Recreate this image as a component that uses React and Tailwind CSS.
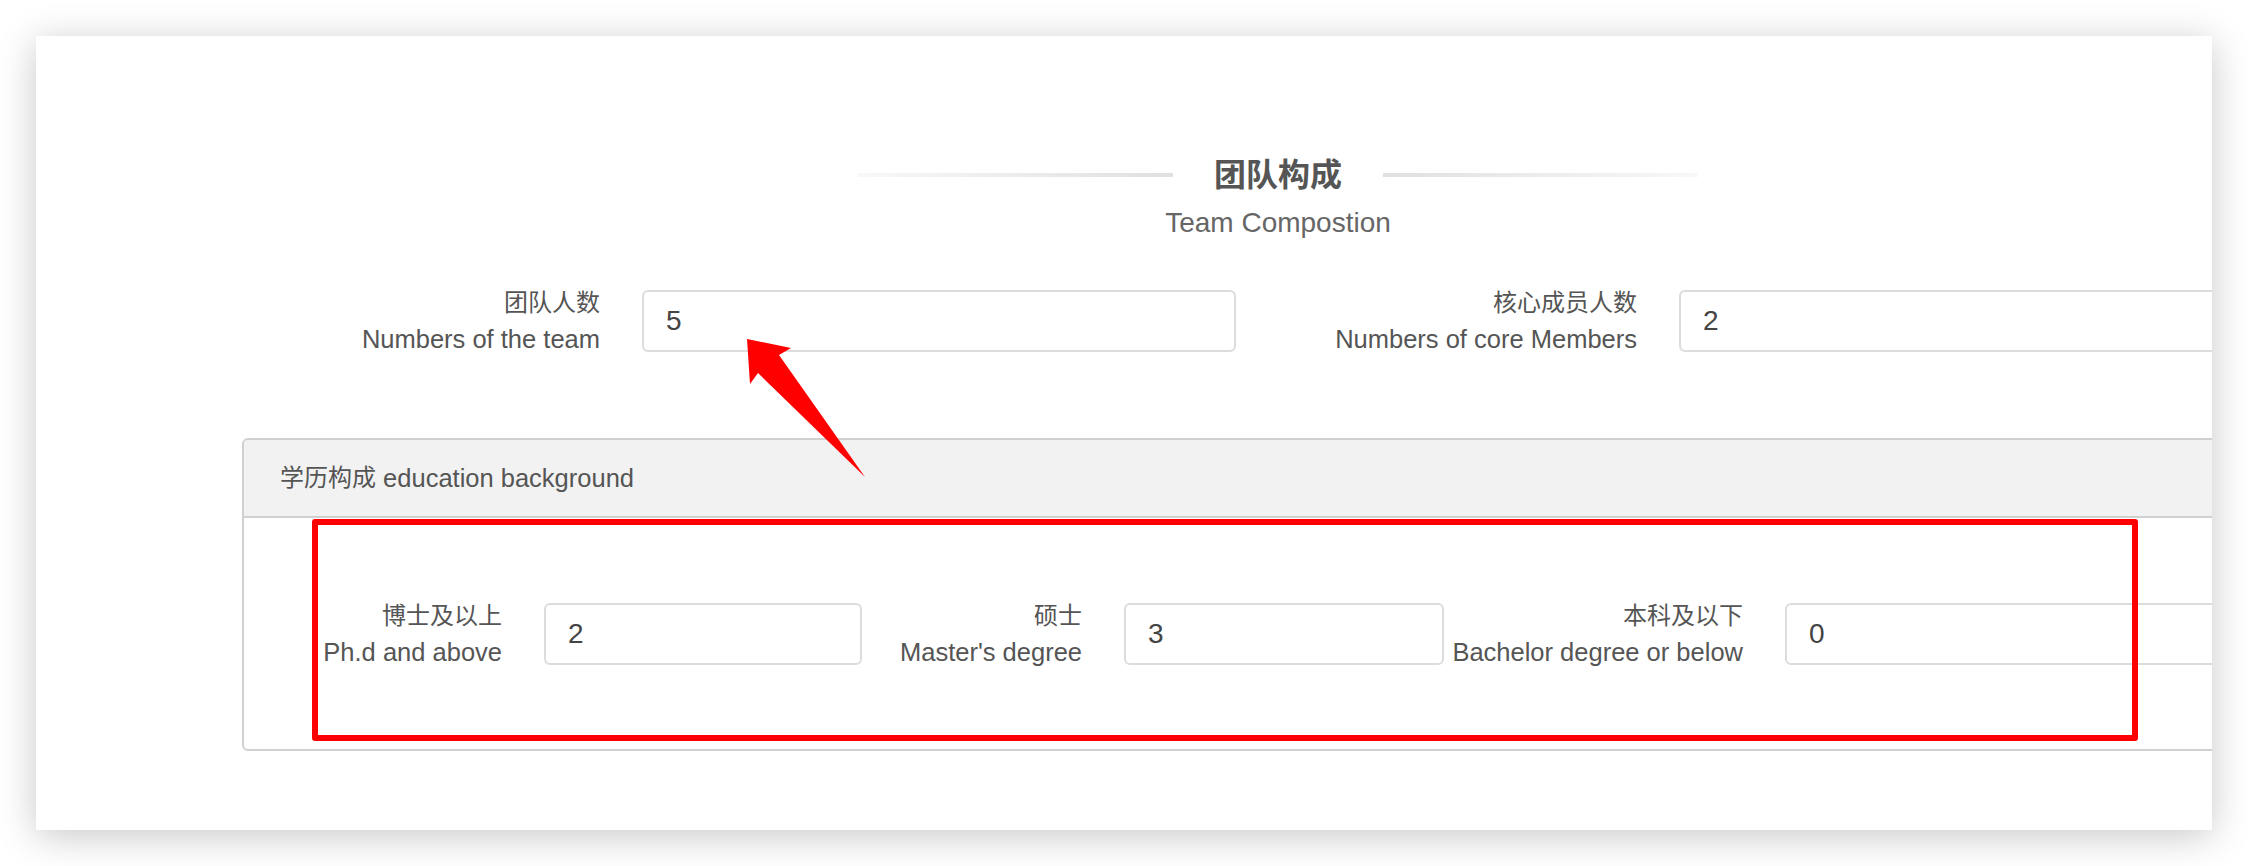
import React from "react";

const FONT = { fontFamily: '"Liberation Sans", "Noto Sans CJK SC", sans-serif' };

function Label({ zh, en, w }) {
  return (
    <div className={`flex flex-col items-end leading-[36px] text-[#555] shrink-0 ${w}`}>
      <span className="text-[24px] whitespace-nowrap">{zh}</span>
      <span className="text-[25.5px] whitespace-nowrap">{en}</span>
    </div>
  );
}

function Field({ value, w }) {
  return (
    <input
      readOnly
      value={value}
      className={`ml-[42px] h-[62px] shrink-0 border-2 border-[#dcdcdc] rounded-[6px] bg-white px-[22px] text-[28px] text-[#444] outline-none ${w}`}
    />
  );
}

export default function App() {
  return (
    <div className="relative w-[2248px] h-[866px] overflow-hidden bg-white pt-[36px] pl-[36px]" style={FONT}>
      <div className="w-[2176px] h-[794px] bg-white overflow-hidden shadow-[0_6px_36px_rgba(0,0,0,0.22)]">
        <div className="ml-[206px] w-[2072px] pt-[119px]">
          {/* Title */}
          <div className="flex items-center justify-center h-[40px]">
            <div className="w-[315px] h-[4px] bg-linear-to-r from-[#f8f8f8] to-[#e0e0e0]" />
            <span className="mx-[41px] text-[32px] leading-[40px] font-bold text-[#555]">团队构成</span>
            <div className="w-[315px] h-[4px] bg-linear-to-l from-[#f8f8f8] to-[#e0e0e0]" />
          </div>
          <div className="mt-[14px] text-center text-[28px] leading-[28px] text-[#666]">Team Compostion</div>

          {/* Top row */}
          <div className="mt-[48px] flex items-center h-[72px]">
            <Label zh="团队人数" en="Numbers of the team" w="w-[358px]" />
            <Field value="5" w="w-[594px]" />
            <div className="ml-[44px]">
              <Label zh="核心成员人数" en="Numbers of core Members" w="w-[357px]" />
            </div>
            <Field value="2" w="w-[594px]" />
          </div>

          {/* Panel */}
          <div className="mt-[81px] border-2 border-[#d0d0d0] rounded-[6px] overflow-hidden">
            <div className="h-[78px] bg-[#f2f2f2] border-b-2 border-[#d0d0d0] flex items-center pl-[36px] text-[#555]">
              <span className="text-[24px]">学历构成</span>
              <span className="text-[25.5px]">&nbsp;education background</span>
            </div>
            <div className="h-[231px] flex items-center">
              <Label zh="博士及以上" en="Ph.d and above" w="w-[258px]" />
              <Field value="2" w="w-[318px]" />
              <Label zh="硕士" en="Master's degree" w="w-[220px]" />
              <Field value="3" w="w-[320px]" />
              <Label zh="本科及以下" en="Bachelor degree or below" w="w-[299px]" />
              <Field value="0" w="w-[450px]" />
            </div>
          </div>
        </div>
      </div>

      {/* Annotation: red box */}
      <div className="absolute left-[312px] top-[519px] w-[1826px] h-[222px] border-[6px] border-[#ff0000] rounded-[3px] pointer-events-none" />

      {/* Annotation: red arrow */}
      <svg className="absolute left-0 top-0 pointer-events-none" width="2248" height="866" viewBox="0 0 2248 866">
        <polygon
          points="747,339 791,348 779,355 865,477 758,373 750,384"
          fill="#ff0000"
        />
      </svg>
    </div>
  );
}
